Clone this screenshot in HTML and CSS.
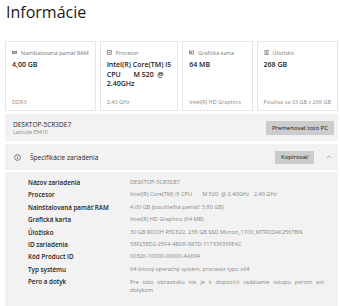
FILE: index.html
```html
<!DOCTYPE html>
<html lang="sk">
<head>
  <meta charset="UTF-8">
  <title>Informácie</title>
  <link rel="stylesheet" href="styles.css">
</head>
<body>
  <h1 class="title">Informácie</h1>

  <div class="cards">
    <div class="card">
      <div class="card-label">
        <svg class="ico" viewBox="0 0 8 8"><rect x="0.5" y="2.5" width="7" height="3" fill="none" stroke="#666" stroke-width="1"/><line x1="2" y1="3" x2="2" y2="5" stroke="#666"/><line x1="4" y1="3" x2="4" y2="5" stroke="#666"/><line x1="6" y1="3" x2="6" y2="5" stroke="#666"/></svg>
        Nainštalovaná pamäť RAM
      </div>
      <div class="card-value">4,00 GB</div>
      <div class="card-foot">DDR3</div>
    </div>
    <div class="card">
      <div class="card-label">
        <svg class="ico" viewBox="0 0 8 8"><rect x="1" y="1" width="6" height="6" fill="none" stroke="#666" stroke-width="1"/><rect x="2.8" y="2.8" width="2.4" height="2.4" fill="#666"/></svg>
        Procesor
      </div>
      <div class="card-value cpu">Intel(R) Core(TM) i5
CPU       M 520  @
2.40GHz</div>
      <div class="card-foot">2.40 GHz</div>
    </div>
    <div class="card">
      <div class="card-label">
        <svg class="ico" viewBox="0 0 8 8"><rect x="0.5" y="1.5" width="7" height="5" fill="none" stroke="#666" stroke-width="1"/><rect x="2" y="3" width="3" height="2" fill="#666"/></svg>
        Grafická karta
      </div>
      <div class="card-value">64 MB</div>
      <div class="card-foot">Intel(R) HD Graphics</div>
    </div>
    <div class="card">
      <div class="card-label">
        <svg class="ico" viewBox="0 0 8 8"><rect x="1.5" y="0.5" width="5" height="7" fill="none" stroke="#666" stroke-width="1"/><line x1="3" y1="5.5" x2="5" y2="5.5" stroke="#666"/><circle cx="4" cy="3" r="1" fill="#666"/></svg>
        Úložisko
      </div>
      <div class="card-value">268 GB</div>
      <div class="card-foot">Používa sa 33 GB z 268 GB</div>
    </div>
  </div>

  <div class="device">
    <div>
      <div class="device-name">DESKTOP-5CR3DE7</div>
      <div class="device-model">Latitude E5410</div>
    </div>
    <button class="btn" type="button">Premenovať toto PC</button>
  </div>

  <div class="spec-head">
    <svg class="info" viewBox="0 0 12 12"><circle cx="6" cy="6" r="5" fill="none" stroke="#333" stroke-width="1"/><line x1="6" y1="5" x2="6" y2="9" stroke="#333" stroke-width="1"/><circle cx="6" cy="3.4" r="0.7" fill="#333"/></svg>
    <span class="spec-title">Špecifikácie zariadenia</span>
    <button class="btn copy" type="button">Kopírovať</button>
    <svg class="chev" viewBox="0 0 10 6"><polyline points="1,5 5,1 9,5" fill="none" stroke="#777" stroke-width="0.9"/></svg>
  </div>

  <div class="spec-body">
    <div class="spec-label">Názov zariadenia</div><div class="spec-value">DESKTOP-5CR3DE7</div>
    <div class="spec-label">Procesor</div><div class="spec-value pre">Intel(R) Core(TM) i5 CPU       M 520  @ 2.40GHz   2.40 GHz</div>
    <div class="spec-label">Nainštalovaná pamäť RAM</div><div class="spec-value">4.00 GB (použiteľná pamäť: 3.80 GB)</div>
    <div class="spec-label">Grafická karta</div><div class="spec-value">Intel(R) HD Graphics (64 MB)</div>
    <div class="spec-label">Úložisko</div><div class="spec-value">30 GB RICOH R5C822, 238 GB SSD Micron_1100_MTFDDAK256TBN</div>
    <div class="spec-label">ID zariadenia</div><div class="spec-value">58F25ED2-25F4-4BDF-887D-11733F35FEAC</div>
    <div class="spec-label">Kód Product ID</div><div class="spec-value">00326-10000-00000-AA694</div>
    <div class="spec-label">Typ systému</div><div class="spec-value">64-bitový operačný systém, procesor typu x64</div>
    <div class="spec-label">Pero a dotyk</div><div class="spec-value justify">Pre túto obrazovku nie je k dispozícii zadávanie vstupu perom ani dotykom</div>
  </div>
</body>
</html>
```

FILE: styles.css
```css
* {
  box-sizing: border-box;
}
body {
  margin: 0;
  background: #fff;
  font-family: "Open Sans", "Noto Sans", sans-serif;
  color: #1a1a1a;
}
.title {
  margin: 0;
  padding: 2px 0 0 6px;
  font-size: 16px;
  font-weight: 400;
  line-height: 20px;
  height: 41px;
}
.cards {
  display: grid;
  grid-template-columns: repeat(4, 1fr);
  gap: 4px;
  margin: 0 2px 0 5px;
}
.card {
  border: 1px solid #e6e6e6;
  height: 70px;
  padding: 6px 6px 0 6px;
  display: flex;
  flex-direction: column;
}
.card-label {
  display: flex;
  align-items: center;
  gap: 4px;
  font-size: 5.5px;
  color: #777;
  height: 9px;
  white-space: nowrap;
}
.ico {
  width: 5px;
  height: 5px;
}
.card-value {
  margin-top: 3px;
  font-size: 7px;
  font-weight: 600;
  line-height: 10px;
  color: #222;
}
.card-value.cpu {
  white-space: pre;
  line-height: 9.5px;
}
.card-foot {
  margin-top: auto;
  margin-bottom: 4px;
  font-size: 5.5px;
  color: #888;
  white-space: nowrap;
}
.device {
  margin: 3px 2px 0 5px;
  background: #f2f2f2;
  height: 27px;
  display: flex;
  align-items: center;
  justify-content: space-between;
  padding: 0 4px 0 8px;
}
.device-name {
  font-size: 6.5px;
  line-height: 9px;
  color: #222;
}
.device-model {
  font-size: 5px;
  color: #888;
  line-height: 7px;
}
.btn {
  font-family: inherit;
  background: #cccccc;
  border: none;
  color: #111;
  font-size: 6px;
  padding: 0 6px;
  height: 14px;
}
.spec-head {
  margin: 3px 2px 0 5px;
  background: #f2f2f2;
  height: 26px;
  display: flex;
  align-items: center;
  padding: 0 6px 0 9px;
}
.info {
  width: 7px;
  height: 7px;
}
.spec-title {
  margin-left: 9px;
  font-size: 6.5px;
  color: #222;
  flex: 1;
}
.btn.copy {
  padding: 0 6px;
  height: 13px;
}
.chev {
  width: 6px;
  height: 4px;
  margin-left: 12px;
}
.spec-body {
  margin: 2px 2px 0 5px;
  background: #f2f2f2;
  display: grid;
  grid-template-columns: 102px 1fr;
  row-gap: 3px;
  padding: 6px 14px 14px 23px;
  align-items: start;
}
.spec-label {
  font-size: 6.3px;
  font-weight: 600;
  color: #222;
  line-height: 9.4px;
  white-space: nowrap;
}
.spec-value {
  font-size: 5.6px;
  color: #888;
  line-height: 9.4px;
  white-space: nowrap;
}
.spec-value.pre {
  white-space: pre;
}
.spec-value.justify {
  white-space: normal;
  text-align: justify;
  line-height: 8px;
  padding-top: 1px;
}
```
